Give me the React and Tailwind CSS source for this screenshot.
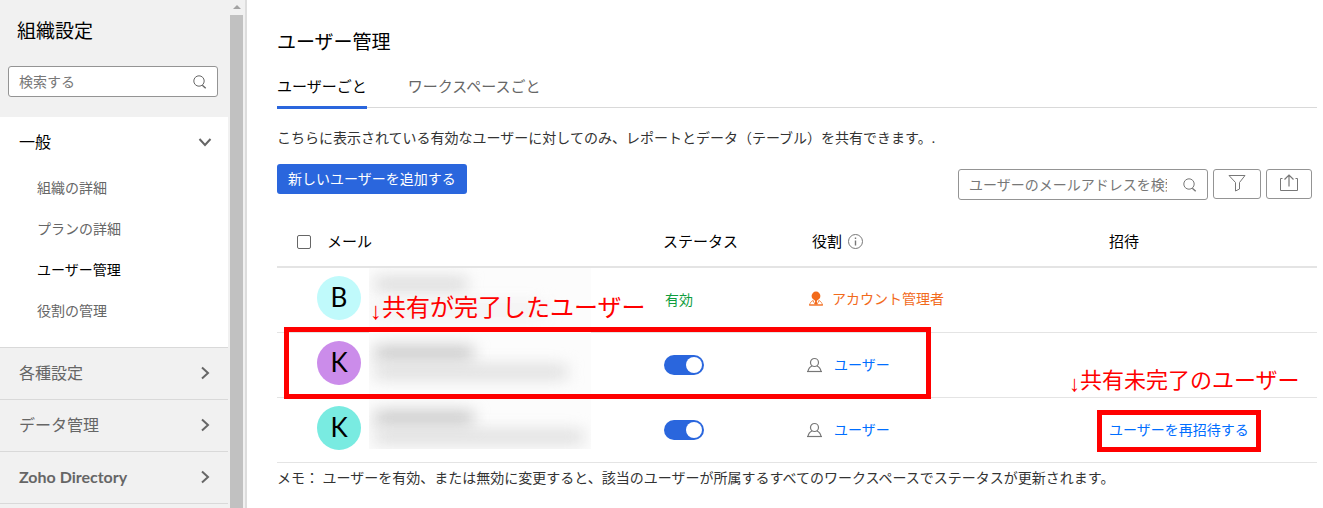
import React, { useState } from "react";

const SearchIcon = ({ className }) => (
  <svg className={className} viewBox="0 0 14 14" fill="none" stroke="currentColor">
    <circle cx="6" cy="6" r="5.2" />
    <path d="M9.3 10.2l3.4 3" strokeWidth="1.4" />
  </svg>
);

const ChevronIcon = ({ className }) => (
  <svg
    className={className}
    viewBox="0 0 14 14"
    fill="none"
    stroke="currentColor"
    strokeWidth="2"
  >
    <path d="M4 1.5l6 5.5-6 5.5" />
  </svg>
);

const UserIcon = () => (
  <svg
    className="w-4 h-4 shrink-0 text-[#777]"
    viewBox="0 0 16 16"
    fill="none"
    stroke="currentColor"
    strokeWidth="1.2"
  >
    <circle cx="8.5" cy="5.5" r="4" />
    <path d="M6 9C3.6 10 2.4 11.6 2 14.5h13c-.4-2.9-1.6-4.5-4-5.5" />
    <path d="M1 14.5h15" />
  </svg>
);

const AdminIcon = () => (
  <svg className="w-4 h-4 shrink-0 text-[#f26a1b]" viewBox="0 0 16 16" fill="none">
    <circle cx="8" cy="5" r="4.4" fill="currentColor" />
    <path d="M6.5 8.5h3L8.7 11l1 2.5H6.3l1-2.5z" fill="currentColor" />
    <path
      d="M5.4 9.4C3.2 10.2 2 11.8 1.6 14h12.8c-.4-2.2-1.6-3.8-3.8-4.6M5 9.5l1.5 3L8 11l1.5 1.5 1.5-3"
      stroke="currentColor"
      strokeOpacity="0.75"
    />
    <path d="M1 14h14" stroke="currentColor" />
  </svg>
);

const generalItems = [
  { name: "組織の詳細" },
  { name: "プランの詳細" },
  { name: "ユーザー管理", active: true },
  { name: "役割の管理" },
];

const sections = [
  { name: "各種設定" },
  { name: "データ管理" },
  { name: "Zoho Directory", bold: true },
];

const users = [
  {
    id: 1,
    initial: "B",
    color: "bg-[#c0fafb]",
    admin: true,
    mask: "top-0 bottom-0",
    line1: "top-[10px] w-[92px] bg-[#d4d4d4]",
    line2: "top-[36px] w-[170px] bg-[#eeeeee]",
  },
  {
    id: 2,
    initial: "K",
    color: "bg-[#cb8cea]",
    mask: "-top-px bottom-0",
    line1: "top-[15px] w-[98px] bg-[#bdbdbd]",
    line2: "top-[34px] w-[192px] bg-[#d8d8d8]",
  },
  {
    id: 3,
    initial: "K",
    color: "bg-[#79ebe1]",
    mask: "-top-px bottom-[13px]",
    line1: "top-[15px] w-[98px] bg-[#bdbdbd]",
    line2: "top-[34px] w-[208px] bg-[#d8d8d8]",
    invite: true,
  },
];

const SideBar = () => (
  <aside className="flex shrink-0 h-screen overflow-hidden border-r-2 border-[#ddd]">
    <div className="w-[228px] bg-[#f1f1f1] text-[#666]">
      <div className="pl-2 pr-2.5 pt-[17px] pb-5">
        <h1 className="px-[9px] text-[19px] leading-7 text-black">組織設定</h1>
        <label className="mt-[21px] flex items-center h-[31px] px-2.5 bg-white border border-[#949494] rounded-[3px]">
          <input
            type="text"
            aria-label="検索する"
            placeholder="検索する"
            className="flex-1 min-w-0 text-sm outline-none placeholder:text-[#777]"
          />
          <SearchIcon className="w-3.5 h-3.5" />
        </label>
      </div>
      <div className="h-[230px] bg-white">
        <button className="flex items-center justify-between w-full h-[50px] pl-[19px] pr-4 text-base text-black">
          一般
          <ChevronIcon className="w-3.5 h-3.5 rotate-90 text-[#666]" />
        </button>
        <ul>
          {generalItems.map((item) => (
            <li key={item.name}>
              <a
                href="#"
                className={`flex items-center h-[41px] pl-[37px] text-sm ${
                  item.active ? "text-black" : ""
                }`}
              >
                {item.name}
              </a>
            </li>
          ))}
        </ul>
      </div>
      {sections.map((section) => (
        <button
          key={section.name}
          className={`flex items-center justify-between w-full h-[52px] pl-[19px] pr-4 pb-0.5 text-base border-t border-[#d9d9d9] ${
            section.bold ? "font-bold" : ""
          }`}
        >
          {section.name}
          <ChevronIcon className="w-3.5 h-3.5" />
        </button>
      ))}
      <div className="border-t border-[#d9d9d9]" />
    </div>
    {/* Scrollbar */}
    <div className="flex flex-col items-center w-[17px] bg-[#f1f1f1]">
      <svg className="w-2 h-[15px] text-[#a3a3a3]" viewBox="0 0 8 15">
        <path d="M4 5l4 4H0z" fill="currentColor" />
      </svg>
      <div className="flex-1 w-[13px] bg-[#c1c1c1]" />
    </div>
  </aside>
);

const UserRow = ({ user }) => {
  const [enabled, setEnabled] = useState(true);

  return (
    <tr className="h-[65px] border-b border-[#e4e4e4]">
      <td className="relative pl-10">
        <div
          className={`flex items-center justify-center w-11 h-11 mb-1 rounded-full text-[26px] text-black ${user.color}`}
        >
          {user.initial}
        </div>
        {/* Masked name and address */}
        <div
          className={`absolute left-[92px] w-[222px] overflow-hidden bg-[#fcfcfc] ${user.mask}`}
        >
          <div className={`absolute left-1.5 h-3 blur-[8px] ${user.line1}`} />
          <div className={`absolute left-1.5 h-3 blur-[8px] ${user.line2}`} />
        </div>
      </td>
      <td>
        {user.admin ? (
          <span className="pl-0.5 text-[#0f9d3e]">有効</span>
        ) : (
          <input
            type="checkbox"
            role="switch"
            aria-label="ステータス"
            checked={enabled}
            onChange={() => setEnabled(!enabled)}
            className="block appearance-none w-10 h-5 ml-px p-0.5 rounded-full bg-gray-400 checked:bg-[#2a66dd] before:block before:w-4 before:h-4 before:rounded-full before:bg-white checked:before:translate-x-5"
          />
        )}
      </td>
      <td>
        {user.admin ? (
          <div className="flex items-center gap-2 pb-0.5 text-[#f26a1b]">
            <AdminIcon />
            アカウント管理者
          </div>
        ) : (
          <div className="flex items-center gap-3 -ml-0.5">
            <UserIcon />
            <a href="#" className="text-[#006eff]">
              ユーザー
            </a>
          </div>
        )}
      </td>
      <td>
        {user.invite && (
          <div className="relative inline-block pl-1">
            <a href="#" className="text-[#006eff]">
              ユーザーを再招待する
            </a>
            <div className="absolute -left-2 -right-3 -top-2.5 -bottom-3 border-[5px] border-[#f00] pointer-events-none" />
            <p className="absolute -left-9 -top-14 flex text-[22px] leading-8 whitespace-nowrap text-[#f00] pointer-events-none">
              <span className="pt-1 font-['Liberation_Sans']">↓</span>
              共有未完了のユーザー
            </p>
          </div>
        )}
      </td>
    </tr>
  );
};

const UserTable = () => (
  <div className="relative mt-[18px]">
    <table className="w-full table-fixed border-collapse text-left text-sm">
      <thead>
        <tr className="h-[49px] border-b-2 border-[#e4e4e4] text-[15px] text-black">
          <th className="w-[386px] font-normal">
            <label className="flex items-center gap-4 pl-5">
              <input
                type="checkbox"
                className="appearance-none w-3.5 h-3.5 border border-[#666] rounded-xs checked:bg-[#2a66dd]"
              />
              メール
            </label>
          </th>
          <th className="w-[145px] font-normal">ステータス</th>
          <th className="w-[297px] pl-1 font-normal">
            <div className="flex items-center gap-1.5">
              役割
              <svg
                className="w-[15px] h-[15px] text-[#777]"
                viewBox="0 0 15 15"
                fill="none"
                stroke="currentColor"
              >
                <circle cx="7.5" cy="7.5" r="7" />
                <path d="M7.5 6.5v5M7.5 3.5v1.5" strokeWidth="1.4" />
              </svg>
            </div>
          </th>
          <th className="pl-1 font-normal">招待</th>
        </tr>
      </thead>
      <tbody>
        {users.map((user) => (
          <UserRow key={user.id} user={user} />
        ))}
      </tbody>
    </table>
    {/* Highlight around the shared user */}
    <div className="absolute left-[7px] top-[109px] w-[647px] h-[72px] border-[5px] border-[#f00] pointer-events-none" />
    <p className="absolute left-[93px] top-[73px] flex text-2xl whitespace-nowrap text-[#f00] pointer-events-none">
      <span className="pt-1 font-['Liberation_Sans']">↓</span>
      共有が完了したユーザー
    </p>
  </div>
);

const App = () => {
  return (
    <div className="flex h-screen overflow-hidden bg-white text-[#333] font-['Lato','Noto_Sans_CJK_JP',sans-serif]">
      <SideBar />
      <main className="flex-1 min-w-0 pl-[30px] pr-1.5 pt-7">
        <h2 className="text-[19px] leading-7 text-black">ユーザー管理</h2>
        <nav className="flex gap-[41px] h-[52px] border-b border-[#d9d9d9] text-[15px]">
          <button className="h-[53px] pt-2.5 border-b-3 border-[#2a66dd] text-black">
            ユーザーごと
          </button>
          <button className="h-[50px] pt-2.5 text-[#666]">
            ワークスペースごと
          </button>
        </nav>
        <p className="mt-5 text-sm">
          こちらに表示されている有効なユーザーに対してのみ、レポートとデータ（テーブル）を共有できます。.
        </p>
        <div className="mt-4 flex items-start justify-between pr-[5px]">
          <button className="h-[30px] px-[11px] rounded-[3px] bg-[#2a66dd] text-sm text-white">
            新しいユーザーを追加する
          </button>
          <div className="flex gap-[5px] mt-[5px] text-[#777]">
            <label className="flex items-center gap-4 w-[250px] h-[31px] px-2.5 border border-[#949494] rounded-[3px]">
              <input
                type="text"
                aria-label="ユーザーのメールアドレスを検索"
                placeholder="ユーザーのメールアドレスを検索"
                className="flex-1 min-w-0 text-sm outline-none placeholder:text-[#777]"
              />
              <SearchIcon className="w-3.5 h-3.5" />
            </label>
            <button
              aria-label="フィルター"
              className="flex items-center justify-center w-12 h-[30px] pb-0.5 border border-[#949494] rounded-[3px]"
            >
              <svg className="w-[18px] h-[18px]" viewBox="0 0 18 18" fill="none" stroke="currentColor">
                <path d="M1 1.5h16l-5.5 7v6.5l-4 2V8.5z" />
              </svg>
            </button>
            <button
              aria-label="エクスポート"
              className="flex items-center justify-center w-[46px] h-[30px] pb-0.5 border border-[#949494] rounded-[3px]"
            >
              <svg className="w-[18px] h-[18px]" viewBox="0 0 18 18" fill="none" stroke="currentColor">
                <path d="M2.5 4.5h-2v12h17v-12h-2" />
                <path d="M9 12.5V1.5M4.5 5.5L9 1l4.5 4.5" strokeWidth="1.2" />
              </svg>
            </button>
          </div>
        </div>
        <UserTable />
        <p className="mt-[5px] text-sm">
          メモ： ユーザーを有効、または無効に変更すると、該当のユーザーが所属するすべてのワークスペースでステータスが更新されます。
        </p>
      </main>
    </div>
  );
};

export default App;
